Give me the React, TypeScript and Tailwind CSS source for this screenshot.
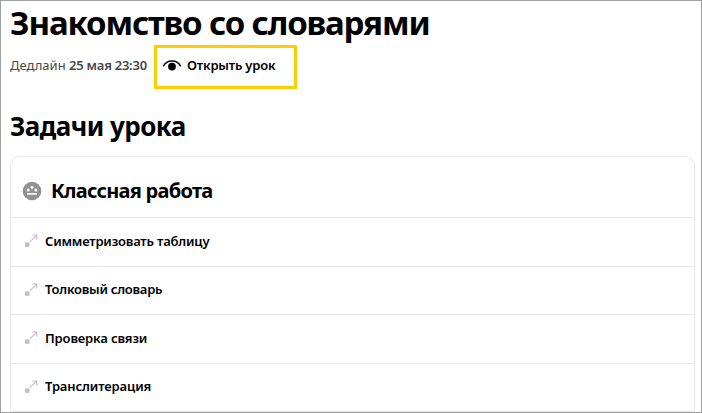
import React from "react";

const tasks = [
    { id: 1, title: "Симметризовать таблицу", text: "tracking-[-0.2px]" },
    { id: 2, title: "Толковый словарь", text: "tracking-[-0.26px]" },
    { id: 3, title: "Проверка связи", text: "tracking-[-0.15px]" },
    { id: 4, title: "Транслитерация", text: "tracking-[-0.13px]" }
];

const EyeIcon = () => (
    <svg className="w-5 h-4 shrink-0" viewBox="0 0 20 16" fill="none">
        <path d="M1.3 8.4C4.6 1.1 15.4 1.1 18.7 8.4" stroke="#000" strokeWidth="1.4" />
        <circle cx="10" cy="8.6" r="3.9" fill="#000" />
    </svg>
);

const ClassworkIcon = () => (
    <svg className="w-5 h-5 shrink-0" viewBox="0 0 20 20">
        <circle cx="10" cy="10" r="9.3" fill="#919191" />
        <g fill="#fff">
            <circle cx="10" cy="6.2" r="1.5" />
            <circle cx="6.2" cy="9" r="1.5" />
            <circle cx="13.8" cy="9" r="1.5" />
            <rect x="5" y="12" width="10" height="1.7" rx="0.3" />
        </g>
    </svg>
);

const TaskIcon = () => (
    <svg className="w-3.5 h-3.5 shrink-0" viewBox="0 0 14 14" fill="none">
        <rect x="1" y="8.5" width="4.5" height="4.3" fill="#c0c0c0" />
        <path d="M5.7 7.9L12.4 1.3M8.4 1H12.8V5.4" stroke="#c0c0c0" strokeWidth="1.1" />
    </svg>
);

const App = () => {
    return (
        <main className="w-[702px] h-[413px] overflow-hidden border border-[#a0a0a0] bg-white pl-[9px] pr-[6px] font-['Noto_Sans',sans-serif] text-black">
            <h1 className="h-11 pt-[2px] text-[33px] leading-[40px] font-bold tracking-[-1.13px] whitespace-nowrap">
                Знакомство со словарями
            </h1>
            <div className="flex h-11 items-center whitespace-nowrap text-[13px]">
                <p className="w-36 pb-0.5 text-[#484848]">
                    Дедлайн <span className="font-semibold tracking-[-0.25px]">25 мая 23:30</span>
                </p>
                <button className="flex h-11 w-[143px] items-center gap-[5px] border-3 border-[#ffcc00] pl-[5px] pb-0.5 font-semibold">
                    <EyeIcon />
                    <span className="tracking-[-0.2px]">Открыть урок</span>
                </button>
            </div>
            <h2 className="mt-5 h-[47px] text-[26px] leading-[34px] font-bold tracking-[-0.55px] whitespace-nowrap">Задачи урока</h2>
            <section className="h-[256px] rounded-t-[10px] border border-[#e8e8e8]">
                <h3 className="flex h-[60px] items-center gap-[9px] pt-[7px] pl-[11px] text-[20px] font-bold whitespace-nowrap">
                    <ClassworkIcon />
                    <span className="tracking-[-0.75px]">Классная работа</span>
                </h3>
                <ul>
                    {tasks.map(({ id, title, text }) => (
                        <li
                            key={id}
                            className="flex h-[48.6px] items-center gap-[7px] border-t border-[#e8e8e8] pl-[13px] pb-px text-[13px] font-semibold whitespace-nowrap"
                        >
                            <TaskIcon />
                            <span className={text}>{title}</span>
                        </li>
                    ))}
                </ul>
            </section>
        </main>
    );
};

export default App;
